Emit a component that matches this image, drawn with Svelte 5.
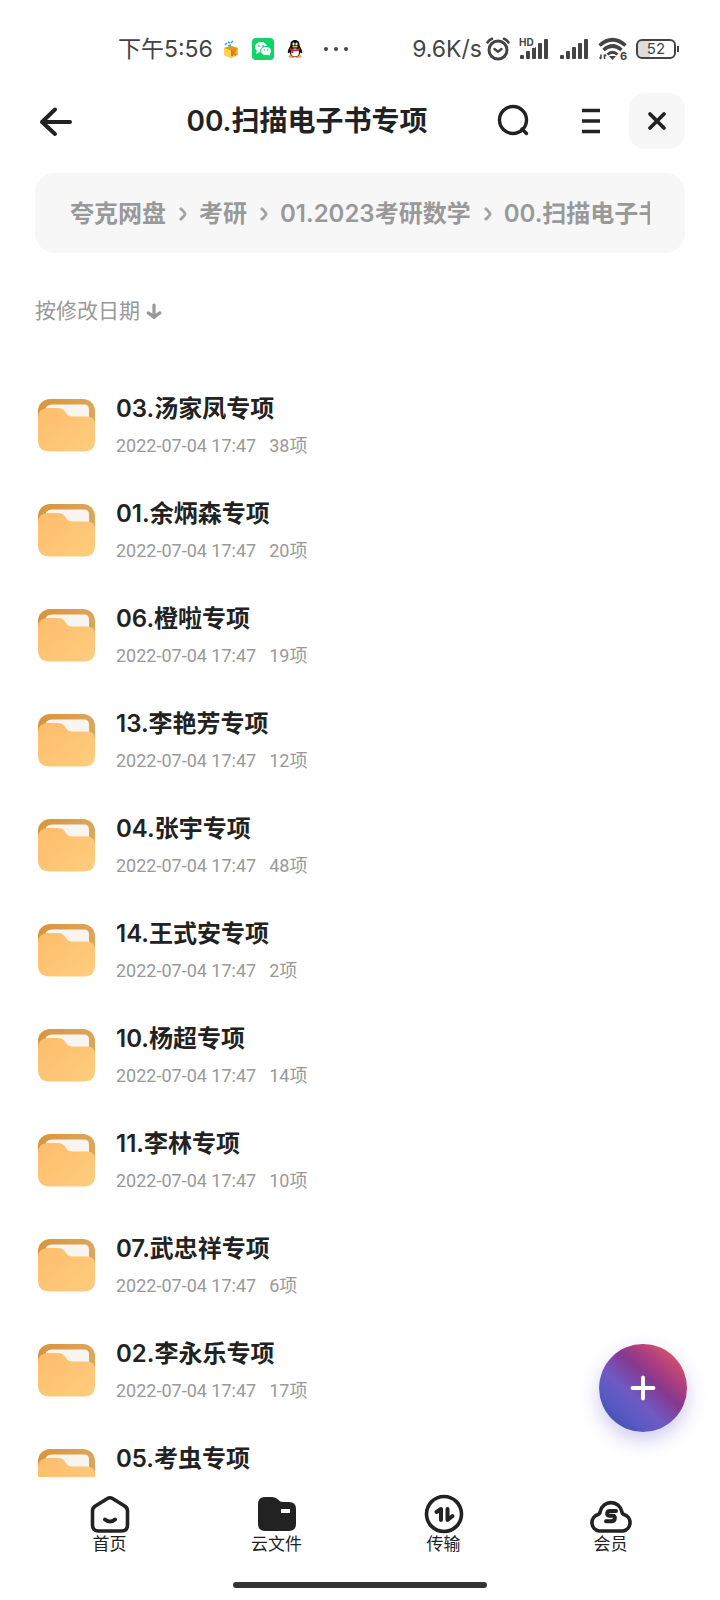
<script lang="ts">
	interface Folder {
		name: string;
		date: string;
		count: number;
	}

	const date = '2022-07-04 17:47';

	const crumbs = ['夸克网盘', '考研', '01.2023考研数学', '00.扫描电子书专项'];

	const folders: Folder[] = [
		{ name: '03.汤家凤专项', date, count: 38 },
		{ name: '01.余炳森专项', date, count: 20 },
		{ name: '06.橙啦专项', date, count: 19 },
		{ name: '13.李艳芳专项', date, count: 12 },
		{ name: '04.张宇专项', date, count: 48 },
		{ name: '14.王式安专项', date, count: 2 },
		{ name: '10.杨超专项', date, count: 14 },
		{ name: '11.李林专项', date, count: 10 },
		{ name: '07.武忠祥专项', date, count: 6 },
		{ name: '02.李永乐专项', date, count: 17 },
		{ name: '05.考虫专项', date, count: 16 }
	];

	const tabs = [
		{ id: 'home', label: '首页' },
		{ id: 'files', label: '云文件' },
		{ id: 'transfer', label: '传输' },
		{ id: 'member', label: '会员' }
	];

	const bars = [4, 8, 12, 16, 20];
</script>

{#snippet signal(hd: boolean)}
	<svg width="32" height="22" viewBox="0 0 32 22">
		{#each bars as h, i}
			<rect x={2 + i * 6} y={21 - h} width="4" height={h} rx="1" fill="#444" />
		{/each}
		{#if hd}
			<rect x="0" y="0" width="17" height="10" fill="#fff" />
			<text x="1" y="8" font-size="10" font-weight="700" fill="#444">HD</text>
		{/if}
	</svg>
{/snippet}

<div class="screen">
	<div class="status">
		<span class="clock">下午5:56</span>
		<div class="notices">
			<svg width="16" height="18" viewBox="0 0 16 18">
				<path d="M1 8l7-2 7 2v7l-7 3-7-3z" fill="#f9bd2c" />
				<path d="M1 8l7-2 7 2-7 3z" fill="#e39a1b" />
				<path d="M1 8l7 2.500v7.500l-7-3z" fill="#ffd24d" />
				<path d="M9 10v6M13 9l-3 4 3 2" stroke="#e8741c" stroke-width="2" fill="none" />
				<path d="M2 5l2-2M5 2l2 1M8 3l2-2M5 6l3-1" stroke="#3fa4e8" stroke-width="1.600" fill="none" />
			</svg>
			<svg width="22" height="22" viewBox="0 0 22 22">
				<rect width="22" height="22" rx="4" fill="#12d268" />
				<ellipse cx="9" cy="9" rx="6" ry="5" fill="#fff" />
				<path d="M5 12l-1 4 4-2z" fill="#fff" />
				<ellipse cx="14" cy="13" rx="5.4" ry="4.6" fill="#fff" stroke="#12d268" />
				<path d="M16 16l2 2v-4z" fill="#fff" />
				<circle cx="7" cy="8" r="0.9" fill="#12d268" />
				<circle cx="11" cy="8" r="0.9" fill="#12d268" />
				<circle cx="12.3" cy="12" r="0.8" fill="#12d268" />
				<circle cx="15.7" cy="12" r="0.8" fill="#12d268" />
			</svg>
			<svg width="16" height="18" viewBox="0 0 16 18">
				<ellipse cx="5" cy="16.3" rx="3.4" ry="1.6" fill="#f5a623" />
				<ellipse cx="11" cy="16.3" rx="3.4" ry="1.6" fill="#f5a623" />
				<path d="M8 0C4.700 0 3.400 2.400 3.400 5c0 1.600-2.800 4.600-2.600 7.600.1.900 1 .7 1.700-.4C3.200 15 5.200 17 8 17s4.800-2 5.500-4.800c.7 1.100 1.600 1.300 1.700.4.200-3-2.600-6-2.600-7.600 0-2.600-1.300-5-4.600-5z" fill="#111" />
				<ellipse cx="8" cy="12.400" rx="4" ry="4" fill="#fff" />
				<path d="M3.200 8q4.800 2.800 9.600 0v2q-4.800 2.400-9.600 0z" fill="#e3202b" />
				<path d="M4.300 10h2v3h-2z" fill="#e3202b" />
				<ellipse cx="6.500" cy="4" rx="1.100" ry="1.500" fill="#fff" />
				<ellipse cx="9.500" cy="4" rx="1.100" ry="1.500" fill="#fff" />
				<ellipse cx="8" cy="6.700" rx="2.800" ry="0.900" fill="#f5a623" />
			</svg>
		</div>
		<svg width="26" height="6" viewBox="0 0 26 6">
			<circle cx="3" cy="3" r="2" fill="#444" />
			<circle cx="13" cy="3" r="2" fill="#444" />
			<circle cx="23" cy="3" r="2" fill="#444" />
		</svg>
		<span class="speed">9.6K/s</span>
		<div class="system">
			<svg width="24" height="24" viewBox="0 0 24 24" fill="none" stroke="#444" stroke-linecap="round">
				<circle cx="12" cy="13" r="9" stroke-width="3" />
				<path d="M1.500 5.500Q3 3 6 1.800M22.500 5.500Q21 3 18 1.800" stroke-width="2.600" />
				<path d="M8.500 12l3.500 2.800 3.500-2.800" stroke-width="2.400" />
			</svg>
			{@render signal(true)}
			{@render signal(false)}
			<svg width="30" height="24" viewBox="0 0 30 24" fill="none" stroke="#444" stroke-width="3.600">
				<path d="M1.500 8.500Q14.500-3 27.500 8.500" />
				<path d="M5.500 13Q14.500 5 23.500 13" />
				<path d="M9.500 17.500Q14.500 13 19.500 17.500" stroke-width="3" />
				<path d="M11 19h7l-3.500 4z" fill="#444" stroke="none" />
				<path d="M3 17.500v4M1.600 20.200L3 22M6.500 22v-4.500M8 19l-1.500-1.500" stroke-width="1.600" />
				<text x="22" y="23" font-size="11" font-weight="700" fill="#444" stroke="none">6</text>
			</svg>
			<div class="battery"><span>52</span></div>
		</div>
	</div>

	<header class="topbar">
		<button class="back" aria-label="返回">
			<svg width="40" height="32" viewBox="0 0 40 32" fill="none" stroke="#222" stroke-width="4" stroke-linecap="round" stroke-linejoin="round">
				<path d="M35 17H7M20 4.500L7 17l13 12" />
			</svg>
		</button>
		<h1>00.扫描电子书专项</h1>
		<button class="tool" aria-label="搜索">
			<svg width="32" height="32" viewBox="0 0 32 32" fill="none" stroke="#222" stroke-width="3.400" stroke-linecap="round">
				<circle cx="15" cy="15" r="13.500" />
				<path d="M24 24l4.500 4.500" />
			</svg>
		</button>
		<button class="tool" aria-label="菜单">
			<svg width="18" height="26" viewBox="0 0 18 26" fill="none" stroke="#222" stroke-width="3.600">
				<path d="M0 2.500h18M0 13h18M0 23.500h18" />
			</svg>
		</button>
		<button class="close" aria-label="关闭">
			<svg width="20" height="20" viewBox="0 0 20 20" fill="none" stroke="#222" stroke-width="3.800" stroke-linecap="round">
				<path d="M3 3l14 14M17 3L3 17" />
			</svg>
		</button>
	</header>

	<nav class="crumbs" aria-label="路径">
		<ol>
			{#each crumbs as crumb, i}
				<li>
					{#if i > 0}
						<svg width="8" height="16" viewBox="0 0 8 16" fill="none" stroke="#a3a3a3" stroke-width="3">
							<path d="M1 2Q6 6.500 6 8T1 14" />
						</svg>
					{/if}
					<a href="#{i}">{crumb}</a>
				</li>
			{/each}
		</ol>
	</nav>

	<button class="sort">
		按修改日期
		<svg width="16" height="18" viewBox="0 0 16 18" fill="none" stroke="#999" stroke-width="3.200" stroke-linecap="round" stroke-linejoin="round">
			<path d="M8 3v12M2.200 11Q6 13 8 15.500q2-2.500 5.800-4.500" />
		</svg>
	</button>

	<main>
		<ul class="list">
			{#each folders as folder (folder.name)}
				<li class="row">
					<svg width="58" height="54" viewBox="0 0 58 54">
						<defs>
							<linearGradient id="front" x1="0" y1="0" x2="1" y2="1">
								<stop offset="0" stop-color="#ffbd6b" />
								<stop offset="1" stop-color="#fdcd7e" />
							</linearGradient>
							<linearGradient id="back" x1="0" y1="0" x2="1" y2="0">
								<stop offset="0" stop-color="#d9953c" />
								<stop offset="1" stop-color="#dda659" />
							</linearGradient>
						</defs>
						<rect x="0" y="0" width="57" height="46" rx="12" fill="url(#back)" />
						<path d="M8 8q2-2.500 6-2.500h32q5 0 5 5v9H8z" fill="#f8f4ef" />
						<path d="M0 19Q0 9 10 9h8c6 0 8 1.500 10 5 1.500 2.600 3.500 3.500 7 3.500h14q8 0 8 8v16q0 11-11 11H12Q0 52.500 0 41z" fill="url(#front)" />
					</svg>
					<div class="info">
						<h2>{folder.name}</h2>
						<p><time>{folder.date}</time><span>{folder.count}项</span></p>
					</div>
				</li>
			{/each}
		</ul>
		<button class="add" aria-label="添加">
			<svg width="26" height="26" viewBox="0 0 26 26" fill="none" stroke="#fff" stroke-width="3.800" stroke-linecap="round">
				<path d="M13 2.500v21M2.500 13h21" />
			</svg>
		</button>
	</main>

	<nav class="tabs" aria-label="主导航">
		{#each tabs as tab (tab.id)}
			<a href="#{tab.id}">
				<svg width="44" height="40" viewBox="0 0 44 40" fill="none" stroke="#222" stroke-width="3.600" stroke-linecap="round" stroke-linejoin="round">
					{#if tab.id === 'home'}
						<path d="M19.500 4.500Q22 3 24.500 4.500L37 12.300Q39.500 14 39.500 17v14q0 6-6 6h-23q-6 0-6-6V17q0-3 2.500-4.700z" />
						<path d="M17 25.500q5 4 10 0" stroke-width="4" />
					{:else if tab.id === 'files'}
						<path d="M3 10q0-7 7-7h7q4 0 6 2.500Q25 8 28 8h6q7 0 7 7v15q0 7-7 7H10q-7 0-7-7z" fill="#222" stroke="none" />
						<path d="M26 17h9" stroke="#fff" stroke-linecap="butt" stroke-width="4" />
					{:else if tab.id === 'transfer'}
						<circle cx="22" cy="20" r="17.500" />
						<path d="M14.500 18l4.500-3v11M25.500 15v11l5-4" stroke-width="4" />
					{:else}
						<path d="M10 37a8.500 8.500 0 0 1-1-16.500q2-.8 2.200-3a11 11 0 0 1 21.600 0q.2 2.200 2.200 3a8.500 8.500 0 0 1-1 16.500z" />
						<path d="M27 17h-6q-2.500 0-2.800 2.300t2 2.500h3.600q2.400 0 2 2.700t-3 2.700H17" stroke-width="4" />
					{/if}
				</svg>
				{tab.label}
			</a>
		{/each}
	</nav>
	<div class="gesture"></div>
</div>

<style>
	:global(body) {
		margin: 0;
		background: #fff;
	}

	.screen {
		display: flex;
		flex-direction: column;
		height: 100vh;
		background: #fff;
		color: #222;
		font-family: Inter, 'Noto Sans CJK SC', sans-serif;
	}

	svg {
		display: block;
		flex: none;
		overflow: visible;
	}

	button {
		display: flex;
		align-items: center;
		padding: 0;
		border: 0;
		background: none;
		font-family: inherit;
	}

	a {
		color: inherit;
		text-decoration: none;
	}

	ol,
	ul {
		margin: 0;
		padding: 0;
		list-style: none;
	}

	.status {
		display: flex;
		align-items: center;
		height: 58px;
		padding: 20px 40px 0 118px;
		color: #444;
		font-size: 23px;
		line-height: 32px;
		white-space: nowrap;
	}

	.notices {
		display: flex;
		align-items: center;
		gap: 13px;
		margin: 0 20px 0 10px;
	}

	.speed {
		margin-left: auto;
	}

	.system {
		display: flex;
		align-items: center;
		gap: 8px;
		margin-left: 4px;
	}

	.battery {
		display: flex;
		align-items: center;
		position: relative;
		box-sizing: border-box;
		width: 40px;
		height: 20px;
		margin-right: 4px;
		border: 2px solid #444;
		border-radius: 6px;
		background: linear-gradient(90deg, #ddd 12px, #fff 12px);
		font-size: 15px;
		line-height: 16px;
	}

	.battery span {
		flex: 1;
		text-align: center;
	}

	.battery::after {
		content: '';
		position: absolute;
		right: -5px;
		width: 2px;
		height: 6px;
		background: #444;
	}

	.topbar {
		display: flex;
		align-items: center;
		height: 56px;
		margin-top: 15px;
		padding: 0 35px;
	}

	.back {
		width: 104px;
		height: 56px;
	}

	h1 {
		flex: 1;
		margin: 0;
		font-size: 28px;
		font-weight: 600;
		line-height: 40px;
		text-align: center;
		white-space: nowrap;
	}

	.tool {
		justify-content: center;
		width: 77px;
		height: 56px;
	}

	.close {
		justify-content: center;
		width: 56px;
		height: 56px;
		border-radius: 16px;
		background: #f7f7f7;
	}

	.crumbs {
		margin: 24px 35px 0;
		padding: 23px 35px 21px;
		border-radius: 20px;
		background: #f7f7f7;
		color: #999;
		font-size: 24px;
		font-weight: 600;
		line-height: 36px;
	}

	.crumbs ol {
		display: flex;
		overflow: hidden;
		white-space: nowrap;
	}

	.crumbs li {
		display: flex;
		align-items: center;
		flex: none;
	}

	.crumbs svg {
		margin: 0 12px 0 13px;
	}

	.sort {
		align-self: flex-start;
		gap: 6px;
		margin: 42px 35px 0;
		color: #999;
		font-size: 21px;
		line-height: 32px;
	}

	main {
		position: relative;
		flex: 1;
		min-height: 0;
		margin-top: 50px;
	}

	.list {
		height: 100%;
		overflow: hidden;
	}

	.row {
		display: flex;
		gap: 20px;
		height: 105px;
		padding: 0 38px;
		box-sizing: border-box;
	}

	.row > svg {
		margin-top: 22px;
	}

	.info {
		padding-top: 14px;
	}

	h2 {
		margin: 0;
		font-size: 24px;
		font-weight: 600;
		line-height: 36px;
	}

	p {
		display: flex;
		gap: 13px;
		margin: 5px 0 0;
		color: #999;
		font-family: Roboto, 'Noto Sans CJK SC', sans-serif;
		font-size: 18px;
		line-height: 28px;
	}

	.add {
		position: absolute;
		right: 33px;
		bottom: 45px;
		justify-content: center;
		width: 88px;
		height: 88px;
		border-radius: 50%;
		background: linear-gradient(42deg, #4350ae 10%, #5a5ac4 26%, #7059c2 40%, #85398f 59%, #a83d80 70%, #d0506f 86%);
		box-shadow: 0 8px 20px rgba(90, 80, 200, 0.3);
	}

	.tabs {
		display: flex;
		padding: 17px 26px 0;
		font-size: 17px;
		line-height: 20px;
	}

	.tabs a {
		display: flex;
		flex: 1;
		flex-direction: column;
		align-items: center;
	}

	.gesture {
		align-self: center;
		width: 254px;
		height: 6px;
		margin: 28px 0 12px;
		border-radius: 3px;
		background: #333;
	}
</style>
